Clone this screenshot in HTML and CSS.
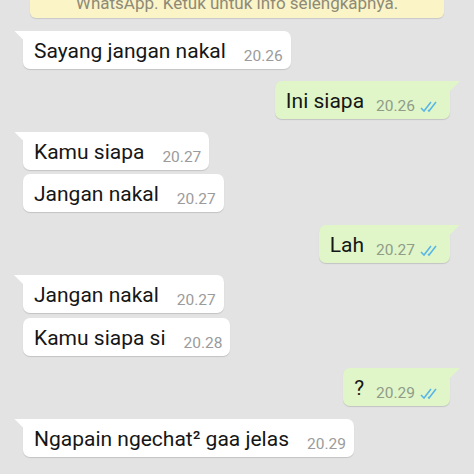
FILE: index.html
```html
<!DOCTYPE html>
<html lang="id">
<head>
    <meta charset="UTF-8">
    <title>Chat</title>
    <link rel="stylesheet" href="styles.css">
</head>
<body>
    <div class="chat">
        <div class="banner"><span>WhatsApp. Ketuk untuk info selengkapnya.</span></div>

        <div class="row in first">
            <div class="bubble tail"><span class="msg">Sayang jangan nakal</span><span class="time">20.26</span></div>
        </div>

        <div class="row out first">
            <div class="bubble tail"><span class="msg">Ini siapa</span><span class="time">20.26</span><svg class="ticks" viewBox="0 0 22 12"><path d="M1 7 L4 10 L11 1 M8 9 L9 10 L16 1" /></svg></div>
        </div>

        <div class="row in first">
            <div class="bubble tail"><span class="msg">Kamu siapa</span><span class="time">20.27</span></div>
        </div>
        <div class="row in">
            <div class="bubble"><span class="msg">Jangan nakal</span><span class="time">20.27</span></div>
        </div>

        <div class="row out first">
            <div class="bubble tail"><span class="msg">Lah</span><span class="time">20.27</span><svg class="ticks" viewBox="0 0 22 12"><path d="M1 7 L4 10 L11 1 M8 9 L9 10 L16 1" /></svg></div>
        </div>

        <div class="row in first">
            <div class="bubble tail"><span class="msg">Jangan nakal</span><span class="time">20.27</span></div>
        </div>
        <div class="row in">
            <div class="bubble"><span class="msg">Kamu siapa si</span><span class="time">20.28</span></div>
        </div>

        <div class="row out first">
            <div class="bubble tail"><span class="msg">?</span><span class="time">20.29</span><svg class="ticks" viewBox="0 0 22 12"><path d="M1 7 L4 10 L11 1 M8 9 L9 10 L16 1" /></svg></div>
        </div>

        <div class="row in first">
            <div class="bubble tail"><span class="msg">Ngapain ngechat² gaa jelas</span><span class="time">20.29</span></div>
        </div>
    </div>
</body>
</html>
```

FILE: styles.css
```css
body {
    margin: 0;
    background-color: #e3e3e3;
    font-family: Roboto, "Noto Sans", sans-serif;
    overflow: hidden;
}

.chat {
    width: 474px;
    height: 474px;
    overflow: hidden;
}

.banner {
    margin: 0 30px 2.5px;
    height: 18px;
    overflow: hidden;
    background: #fbf4c7;
    border-radius: 0 0 6px 6px;
    box-shadow: 0 1px 1px rgba(0, 0, 0, 0.12);
    text-align: center;
    color: #8d8a78;
    font-size: 17px;
    line-height: 20px;
}

.banner span {
    display: block;
    margin-top: -7px;
}

.row {
    display: flex;
    margin-top: 4.5px;
}

.row.first {
    margin-top: 12.5px;
}

.row.in {
    padding-left: 23px;
}

.row.out {
    justify-content: flex-end;
    padding-right: 24px;
}

.bubble {
    position: relative;
    display: flex;
    align-items: flex-start;
    height: 38px;
    box-sizing: border-box;
    padding: 8px 8px 0 11px;
    background: #fff;
    border-radius: 7px;
    box-shadow: 0 1px 1px rgba(0, 0, 0, 0.14);
}

.out .bubble {
    background: #e0f6c9;
}

.bubble.tail::before {
    content: "";
    position: absolute;
    top: 0;
    width: 10px;
    height: 10px;
    background: inherit;
}

.in .bubble.tail {
    border-top-left-radius: 0;
}

.in .bubble.tail::before {
    left: -9px;
    clip-path: polygon(0 0, 100% 0, 100% 100%);
}

.out .bubble.tail {
    border-top-right-radius: 0;
}

.out .bubble.tail::before {
    right: -10px;
    clip-path: polygon(0 0, 100% 0, 0 100%);
}

.msg {
    font-size: 21px;
    line-height: 24px;
    color: #161616;
    white-space: nowrap;
}

.time {
    margin-top: 9px;
    margin-left: 18px;
    font-size: 15.5px;
    line-height: 16px;
    color: #9b9b9b;
}

.out .time {
    margin-left: 12px;
    color: #8f9c88;
}

.ticks {
    width: 22px;
    height: 12px;
    margin-top: 12px;
    margin-left: 5px;
    fill: none;
    stroke: #5ab6e6;
    stroke-width: 1.6;
}
```
